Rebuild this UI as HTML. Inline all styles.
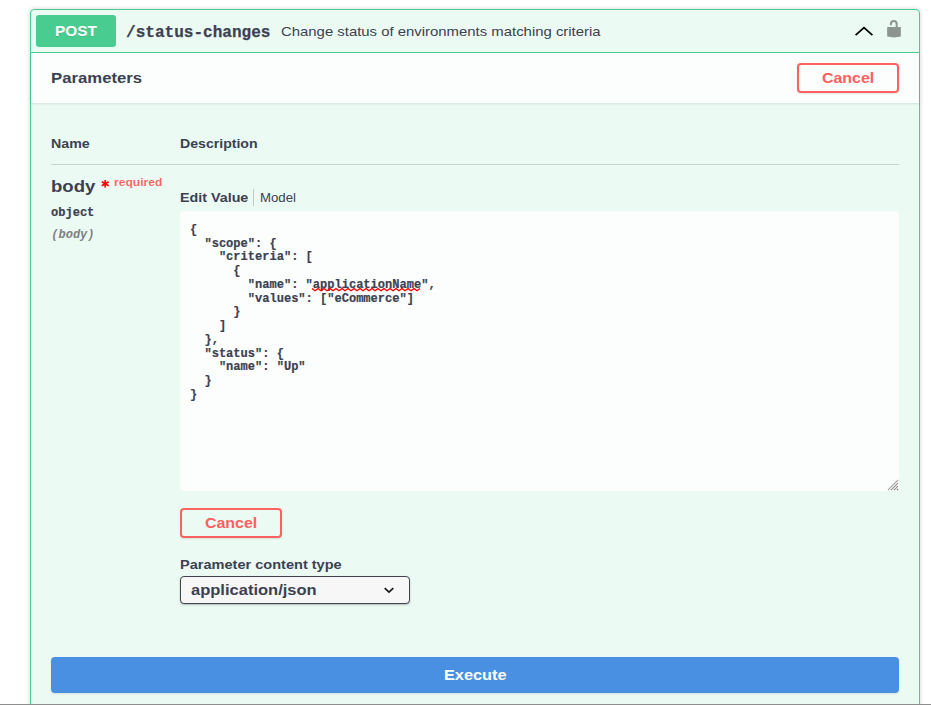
<!DOCTYPE html>
<html><head><meta charset="utf-8">
<style>
html,body{margin:0;padding:0;width:931px;height:705px;overflow:hidden;background:#fff;}
body{position:relative;font-family:"Liberation Sans",sans-serif;color:#3b4151;}
.a{position:absolute;white-space:nowrap;}
.t{position:absolute;white-space:nowrap;transform-origin:0 0;line-height:1;}
.b{font-weight:bold;}
.mono{font-family:"Liberation Mono",monospace;}
#op{position:absolute;left:30px;top:9px;width:888px;height:720px;border:1px solid #49cc90;border-radius:4px;background:rgba(73,204,144,.1);box-shadow:0 0 4px rgba(0,0,0,.19);}
#sumline{position:absolute;left:31px;top:52px;width:888px;height:1px;background:#49cc90;}
#post{position:absolute;left:36px;top:15px;width:80px;height:32px;border-radius:3px;background:#49cc90;}
#sech{position:absolute;left:31px;top:53px;width:888px;height:50px;background:rgba(255,255,255,.8);box-shadow:0 1px 2px rgba(0,0,0,.1);}
.btnc{position:absolute;box-sizing:border-box;border:2px solid #ff6060;border-radius:4px;box-shadow:0 1px 2px rgba(0,0,0,.1);}
#hline{position:absolute;left:51px;top:164px;width:848px;height:1px;background:rgba(59,65,81,.2);}
#ta{position:absolute;left:180px;top:211px;width:719px;height:280px;border-radius:4px;background:rgba(255,255,255,.8);}
#code{position:absolute;left:190px;top:223.8px;margin:0;transform-origin:0 0;transform:scaleX(0.963);font-family:"Liberation Mono",monospace;font-weight:bold;font-size:12.5px;line-height:13.76px;color:#3b4151;-webkit-text-stroke:0.2px #3b4151;white-space:pre;}
#sel{position:absolute;left:180px;top:576px;width:230px;height:28px;box-sizing:border-box;border:1px solid #41444e;border-radius:4px;background:#f7f7f7;box-shadow:0 1px 2px rgba(0,0,0,.25);}
#exec{position:absolute;left:51px;top:657px;width:848px;height:36px;border-radius:4px;background:#4990e2;box-shadow:0 1px 2px rgba(0,0,0,.1);}
#bot{position:absolute;left:0;top:704px;width:931px;height:1px;background:#8e8e8e;}
</style></head><body>
<div id="op"></div>
<div id="sumline"></div>
<div id="post"></div>
<div class="t b" style="left:55.3px;top:24px;font-size:14.7px;color:#fff;transform:scaleX(1.044);text-shadow:0 1px 0 rgba(0,0,0,.1)">POST</div>
<div class="t b mono" style="left:126px;top:25px;font-size:16.6px;transform:scaleX(0.9666);-webkit-text-stroke:0.25px #3b4151">/status-changes</div>
<div class="t" style="left:281px;top:25px;font-size:13.65px;transform:scaleX(1.092)">Change status of environments matching criteria</div>
<!-- chevron up -->
<svg class="a" style="left:850px;top:18px" width="28" height="28" viewBox="0 0 28 28"><path d="M5.6 17.2 L14 9.6 L22.4 17.2" fill="none" stroke="#000" stroke-width="1.8"/></svg>
<!-- lock -->
<svg class="a" style="left:880px;top:15px" width="28" height="28" viewBox="0 0 28 28"><path d="M10.9 10.2 V8.9 A2.9 2.9 0 0 1 16.7 8.9 V12.5" fill="none" stroke="#8c9590" stroke-width="2"/><path d="M7.15 11.9 H20.85 V21.6 Q14 23.2 7.15 21.6 Z" fill="#8c9590"/></svg>

<div id="sech"></div>
<div class="t b" style="left:51px;top:71px;font-size:14.7px;transform:scaleX(1.139)">Parameters</div>
<div class="btnc" style="left:797px;top:63px;width:102px;height:30px;"></div>
<div class="t b" style="left:822px;top:71px;font-size:14.7px;color:#ff6060;transform:scaleX(1.085)">Cancel</div>

<div class="t b" style="left:51px;top:138px;font-size:12.6px;transform:scaleX(1.13)">Name</div>
<div class="t b" style="left:180px;top:138px;font-size:12.6px;transform:scaleX(1.12)">Description</div>
<div id="hline"></div>

<div class="t b" style="left:51px;top:179px;font-size:16.8px;transform:scaleX(1.105)">body</div>
<svg class="a" style="left:98px;top:176px" width="14" height="14" viewBox="0 0 14 14"><path d="M7.2 3.9 V11.5 M3.75 5.7 L10.65 9.7 M3.75 9.7 L10.65 5.7" stroke="#f00" stroke-width="1.7"/></svg>
<div class="t b" style="left:114px;top:177px;font-size:10.5px;color:rgba(255,0,0,.6);transform:scaleX(1.15)">required</div>
<div class="t b mono" style="left:51px;top:206.5px;font-size:12.5px;transform:scaleX(0.963);-webkit-text-stroke:0.2px #3b4151">object</div>
<div class="t mono" style="left:51.3px;top:229px;font-size:12px;font-style:italic;font-weight:bold;color:gray">(body)</div>

<div class="t b" style="left:180px;top:192px;font-size:12.6px;transform:scaleX(1.135)">Edit Value</div>
<div class="a" style="left:253px;top:189px;width:1px;height:17px;background:#c3c9c7"></div>
<div class="t" style="left:260px;top:192px;font-size:12.6px;transform:scaleX(1.05)">Model</div>

<div id="ta"></div>
<pre id="code">{
  "scope": {
    "criteria": [
      {
        "name": "applicationName",
        "values": ["eCommerce"]
      }
    ]
  },
  "status": {
    "name": "Up"
  }
}</pre>
<!-- spell squiggle -->
<svg class="a" style="left:310px;top:284px" width="114" height="10" viewBox="0 0 114 10"><path d="M2 4.4 L5 6.8 L8 4.4 L11 6.8 L14 4.4 L17 6.8 L20 4.4 L23 6.8 L26 4.4 L29 6.8 L32 4.4 L35 6.8 L38 4.4 L41 6.8 L44 4.4 L47 6.8 L50 4.4 L53 6.8 L56 4.4 L59 6.8 L62 4.4 L65 6.8 L68 4.4 L71 6.8 L74 4.4 L77 6.8 L80 4.4 L83 6.8 L86 4.4 L89 6.8 L92 4.4 L95 6.8 L98 4.4 L101 6.8 L104 4.4 L107 6.8 L110 4.4" fill="none" stroke="#f00" stroke-width="1.3" stroke-linejoin="round"/></svg>
<!-- resize grip -->
<svg class="a" style="left:886px;top:478px" width="14" height="14" viewBox="0 0 14 14"><path d="M2 12 L12 2" stroke="#a8a8a8" stroke-width="1.1"/><path d="M5 12 L12 5" stroke="#6a6a6a" stroke-width="1.1" stroke-dasharray="1 0.41"/><path d="M8 12 L12 8" stroke="#6a6a6a" stroke-width="1.1" stroke-dasharray="1 0.41"/><path d="M11 12 L12 11" stroke="#6a6a6a" stroke-width="1.1"/></svg>

<div class="btnc" style="left:180px;top:508px;width:102px;height:30px;"></div>
<div class="t b" style="left:205px;top:516px;font-size:14.7px;color:#ff6060;transform:scaleX(1.085)">Cancel</div>

<div class="t b" style="left:180px;top:559px;font-size:12.6px;transform:scaleX(1.155)">Parameter content type</div>
<div id="sel"></div>
<div class="t b" style="left:191px;top:583px;font-size:14.7px;transform:scaleX(1.124)">application/json</div>
<svg class="a" style="left:382px;top:584px" width="14" height="12" viewBox="0 0 14 12"><path d="M2.7 4.1 L7 8.2 L11.3 4.1" fill="none" stroke="#1a1a1a" stroke-width="1.7"/></svg>

<div id="exec"></div>
<div class="t b" style="left:444.2px;top:668px;font-size:14.7px;color:#fff;transform:scaleX(1.109)">Execute</div>
<div id="bot"></div>
</body></html>
